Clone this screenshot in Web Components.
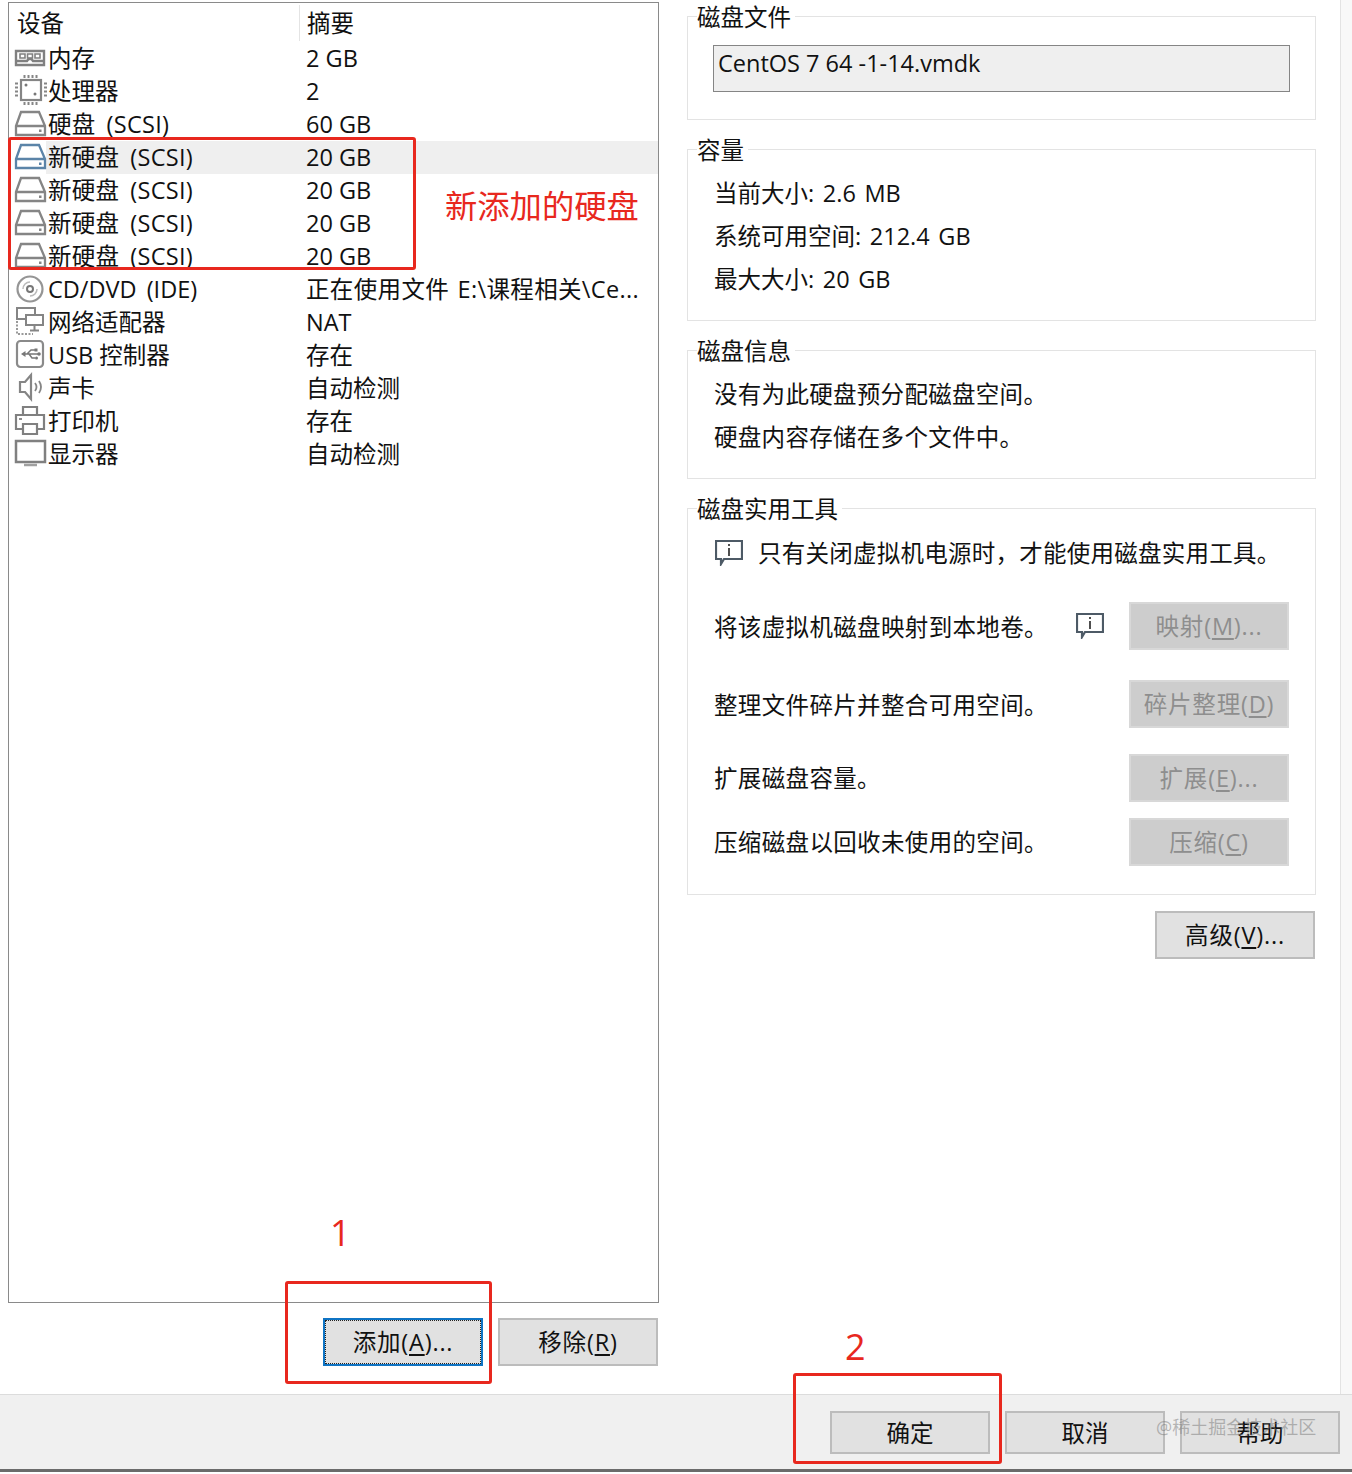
<!DOCTYPE html>
<html>
<head>
<meta charset="utf-8">
<title>虚拟机设置</title>
<style>
  html, body { margin: 0; background: #fff; }
  body {
    font-family: "Open Sans", "Noto Sans CJK SC", sans-serif;
    font-size: 23.5px;
    color: #111;
  }
</style>
</head>
<body>
<vm-settings></vm-settings>

<script>
const ICONS = {
  memory: `<path d="M1 8h28v14H1zM1 18h11l1.500-2h3l1.500 2h11" fill="none" stroke="#808080" stroke-width="2.400"/><path d="M5 11h5v4H5zM12.500 11h5v4h-5zM20 11h5v4h-5z" fill="none" stroke="#808080" stroke-width="1.600"/>`,
  cpu: `<rect x="6" y="4" width="20" height="20" fill="none" stroke="#858585" stroke-width="2.200"/><circle cx="11" cy="9" r="1.500" fill="#777"/><circle cx="20" cy="18" r="1.500" fill="#777"/><path d="M9.500 -1v3M13.500 -1v3M17.500 -1v3M21.500 -1v3M9.500 26v3M13.500 26v3M17.500 26v3M21.500 26v3M0 7.500h3M0 11.500h3M0 15.500h3M0 19.500h3M29 7.500h3M29 11.500h3M29 15.500h3M29 19.500h3" stroke="#858585" stroke-width="2"/>`,
  disk: `<path d="M6 3h18l6 14v9H1v-9zM1 17h29" fill="none" stroke="var(--c,#858585)" stroke-width="2.300"/><rect x="24" y="20.500" width="2.500" height="2.500" fill="var(--c,#858585)"/>`,
  cd: `<circle cx="15" cy="15" r="12.500" fill="none" stroke="#959595" stroke-width="2.200"/><circle cx="15" cy="15" r="3" fill="none" stroke="#777" stroke-width="2"/><path d="M8 15a7 7 0 0 1 7-7M22 15a7 7 0 0 1-7 7" fill="none" stroke="#bbb" stroke-width="1.500"/>`,
  net: `<path d="M2 14v13h16" fill="none" stroke="#999" stroke-width="2" stroke-dasharray="2 1.500"/><path d="M2 1h18v11H2z" fill="none" stroke="#858585" stroke-width="2"/><path d="M11 8h17v10H11z" fill="#fff" stroke="#858585" stroke-width="2"/><path d="M19.500 18v5M15 23.500h9" stroke="#858585" stroke-width="2"/>`,
  usb: `<rect x="2" y="1" width="26" height="26" rx="3.500" fill="none" stroke="#8a8a8a" stroke-width="2.200"/><path d="M8 14h15M12 14l4-4h4M14 14l3 4h3" fill="none" stroke="#777" stroke-width="1.500"/><path d="M6 14l4.500-3v6z" fill="#777"/><rect x="19.500" y="8.500" width="3" height="3" fill="#777"/><circle cx="24" cy="14" r="1.800" fill="#777"/><circle cx="21.500" cy="18" r="1.500" fill="#777"/>`,
  sound: `<path d="M5 9h5l6-7v24l-6-7H5z" fill="none" stroke="#858585" stroke-width="2.200"/><path d="M20 10q3 4 0 8M24 8q4 6 0 12" fill="none" stroke="#858585" stroke-width="1.800"/>`,
  printer: `<path d="M8 9V1h14v8" fill="none" stroke="#808080" stroke-width="2.200"/><path d="M8 23H1V9h28v14h-7" fill="none" stroke="#808080" stroke-width="2.200"/><path d="M8 18h14v10H8z" fill="none" stroke="#808080" stroke-width="2.200"/><path d="M4 13h3" stroke="#808080" stroke-width="1.800"/>`,
  monitor: `<rect x="1" y="2" width="29" height="21" fill="none" stroke="#808080" stroke-width="2.500"/><path d="M9 26h13" stroke="#a0a0a0" stroke-width="2.500"/>`
};

const ROWS = [
  ['memory', '内存', '2 GB'],
  ['cpu', '处理器', '2'],
  ['disk', '硬盘 (SCSI)', '60 GB'],
  ['disk', '新硬盘 (SCSI)', '20 GB', 'selected'],
  ['disk', '新硬盘 (SCSI)', '20 GB'],
  ['disk', '新硬盘 (SCSI)', '20 GB'],
  ['disk', '新硬盘 (SCSI)', '20 GB'],
  ['cd', 'CD/DVD (IDE)', '<span style="word-spacing:2px;letter-spacing:.35px">正在使用文件 E:\\课程相关\\Ce...</span>'],
  ['net', '网络适配器', 'NAT'],
  ['usb', 'USB 控制器', '存在'],
  ['sound', '声卡', '自动检测'],
  ['printer', '打印机', '存在'],
  ['monitor', '显示器', '自动检测']
];

class DeviceRow extends HTMLElement {
  constructor() {
    super();
    this.attachShadow({ mode: 'open' });
    const sel = this.hasAttribute('selected');
    const kind = this.getAttribute('icon');
    this.shadowRoot.innerHTML = `
      <style>
        :host { display: grid; grid-template-columns: 297px 1fr; height: 33px; align-items: center; white-space: nowrap; }
        :host([selected]) { background: linear-gradient(90deg, transparent 37px, #efefef 37px); }
        .name { display: flex; align-items: center; gap: 1px; padding-left: 6px; }
        .name span { word-spacing: ${kind === 'disk' ? 4.5 : kind === 'cd' ? 4 : 0}px; letter-spacing: ${kind === 'disk' ? .3 : 0}px; }
        svg { width: 32px; height: 30px; flex: none; overflow: visible; --c: ${sel ? '#5b84a8' : '#858585'}; }
      </style>
      <div class="name"><svg viewBox="0 0 32 30">${ICONS[kind]}</svg><span>${this.getAttribute('name')}</span></div>
      <div class="sum"><slot></slot></div>`;
  }
}
customElements.define('device-row', DeviceRow);

class DeviceList extends HTMLElement {
  constructor() {
    super();
    this.attachShadow({ mode: 'open' });
    this.shadowRoot.innerHTML = `
      <style>
        :host { display: block; width: 649px; height: 1299px; border: 1px solid #8a8a8a; }
        .head { display: grid; grid-template-columns: 290px 1fr; height: 39px; align-items: center; }
        .head div { padding-left: 8px; height: 36px; line-height: 36px; }
        .head div + div { border-left: 1px solid #e4e4e4; padding-left: 7px; }
      </style>
      <div class="head"><div>设备</div><div>摘要</div></div>
      <slot></slot>`;
  }
}
customElements.define('device-list', DeviceList);

class GroupBox extends HTMLElement {
  constructor() {
    super();
    this.attachShadow({ mode: 'open' });
    this.shadowRoot.innerHTML = `
      <style>
        :host { display: block; position: relative; box-sizing: border-box; border: 1px solid #e3e3e3; }
        .legend { position: absolute; left: 9px; top: -17px; background: #fff; line-height: 34px; padding-right: 4px; }
      </style>
      <div class="legend">${this.getAttribute('label')}</div>
      <slot></slot>`;
  }
}
customElements.define('group-box', GroupBox);

class WinButton extends HTMLElement {
  constructor() {
    super();
    this.attachShadow({ mode: 'open' });
    this.shadowRoot.innerHTML = `
      <style>
        :host { display: flex; align-items: center; justify-content: center; box-sizing: border-box; width: 160px; height: 48px; flex: none;
          background: #e1e1e1; border: 2px solid #bcbcbc; color: #111; white-space: nowrap; letter-spacing: .8px; }
        :host([disabled]) { background: #cdcdcd; border-color: #d8d8d8; color: #8e8e8e; }
        :host([focused]) { border-color: #0f74c4; outline: 1px dotted #222; outline-offset: -3px; }
        ::slotted(u) { text-underline-offset: 3px; }
      </style>
      <slot></slot>`;
  }
}
customElements.define('win-button', WinButton);

class InfoIcon extends HTMLElement {
  constructor() {
    super();
    this.attachShadow({ mode: 'open' });
    this.shadowRoot.innerHTML = `
      <style>
        :host { display: block; width: 28px; height: 26px; flex: none; }
        svg { display: block; }
      </style>
      <svg width="28" height="26" viewBox="0 0 28 26">
        <path d="M1 1h26v18H9l-3 5v-5H1z" fill="#fff" stroke="#4d5a66" stroke-width="2.200"/>
        <path d="M14 8v8" stroke="#222" stroke-width="1.600"/><path d="M14 4v2" stroke="#222" stroke-width="1.600"/>
      </svg>`;
  }
}
customElements.define('info-icon', InfoIcon);

class RedMark extends HTMLElement {
  constructor() {
    super();
    this.attachShadow({ mode: 'open' });
    this.shadowRoot.innerHTML = `
      <style>
        :host { display: block; position: absolute; box-sizing: border-box; border: 3px solid #e8281e; border-radius: 3px; pointer-events: none; }
      </style>`;
  }
}
customElements.define('red-mark', RedMark);

class RedNote extends HTMLElement {
  constructor() {
    super();
    this.attachShadow({ mode: 'open' });
    this.shadowRoot.innerHTML = `
      <style>
        :host { display: block; position: absolute; color: #e8281e; white-space: nowrap; line-height: 1; }
      </style>
      <slot></slot>`;
  }
}
customElements.define('red-note', RedNote);

class VmSettings extends HTMLElement {
  constructor() {
    super();
    this.attachShadow({ mode: 'open' });
    const rows = ROWS.map(r => `<device-row icon="${r[0]}" name="${r[1]}" ${r[3] || ''}>${r[2]}</device-row>`).join('');
    this.shadowRoot.innerHTML = `
      <style>
        :host { display: block; position: relative; width: 1352px; height: 1474px; overflow: hidden; line-height: 1.3; background: #fff; }
        .main { display: flex; height: 1395px; box-sizing: border-box; border-bottom: 1px solid #dcdcdc; background: #f8f8f8; }
        .left { width: 687px; flex: none; padding: 2px 0 0 8px; box-sizing: border-box; background: #fff; }
        .left-btns { display: flex; justify-content: flex-end; gap: 15px; width: 650px; margin-top: 15px; }
        .right { width: 654px; flex: none; padding-top: 16px; box-sizing: border-box; border-right: 1px solid #e3e3e3; background: #fff; }
        .right-in { width: 629px; display: flex; flex-direction: column; gap: 29px; }
        .file { height: 104px; padding: 28px 25px 0; }
        .file-in { height: 45px; background: #efefef; border: 1px solid #858585; padding-left: 4px; line-height: 34px; }
        .cap { height: 172px; padding: 22px 26px 0; }
        .line { height: 43px; display: flex; align-items: center; letter-spacing: .3px; }
        .cap .line { word-spacing: 2.500px; letter-spacing: 0; }
        .info { height: 129px; padding: 22px 26px 0; }
        .tools { height: 387px; padding: 26px 26px 0 26px; }
        .tool { display: flex; align-items: center; justify-content: space-between; }
        .tool span { padding-top: 2px; letter-spacing: .35px; }
        .tool.up span { padding-top: 0; }
        .tool info-icon { margin-left: auto; margin-right: 25px; }
        .note { display: flex; align-items: center; gap: 15px; height: 36px; padding-left: 1px; letter-spacing: .25px; }
        .adv { display: flex; justify-content: flex-end; width: 628px; margin-top: 16px; }
        .foot { display: flex; justify-content: flex-end; gap: 15px; height: 74px; box-sizing: border-box; padding: 16px 12px 0 0; background: #f0f0f0; }
        .foot win-button { height: 43px; padding-top: 2px; letter-spacing: 0; }
        .edge { height: 3px; background: #6b6b6b; }
        .wm { position: absolute; left: 1156px; top: 1416px; font-size: 18px; color: rgba(120,120,120,.5); white-space: nowrap; }
      </style>
      <div class="main">
        <div class="left">
          <device-list>${rows}</device-list>
          <div class="left-btns">
            <win-button focused>添加(<u>A</u>)...</win-button>
            <win-button>移除(<u>R</u>)</win-button>
          </div>
        </div>
        <div class="right">
          <div class="right-in">
            <group-box label="磁盘文件" class="file"><div class="file-in">CentOS 7 64 -1-14.vmdk</div></group-box>
            <group-box label="容量" class="cap">
              <div class="line">当前大小: 2.6 MB</div>
              <div class="line">系统可用空间: 212.4 GB</div>
              <div class="line">最大大小: 20 GB</div>
            </group-box>
            <group-box label="磁盘信息" class="info">
              <div class="line">没有为此硬盘预分配磁盘空间。</div>
              <div class="line">硬盘内容存储在多个文件中。</div>
            </group-box>
            <group-box label="磁盘实用工具" class="tools">
              <div class="note"><info-icon></info-icon><span>只有关闭虚拟机电源时，才能使用磁盘实用工具。</span></div>
              <div class="tool" style="margin-top:31px"><span>将该虚拟机磁盘映射到本地卷。</span><info-icon></info-icon><win-button disabled>映射(<u>M</u>)...</win-button></div>
              <div class="tool" style="margin-top:30px"><span>整理文件碎片并整合可用空间。</span><win-button disabled>碎片整理(<u>D</u>)</win-button></div>
              <div class="tool up" style="margin-top:26px"><span>扩展磁盘容量。</span><win-button disabled>扩展(<u>E</u>)...</win-button></div>
              <div class="tool up" style="margin-top:16px"><span>压缩磁盘以回收未使用的空间。</span><win-button disabled>压缩(<u>C</u>)</win-button></div>
            </group-box>
          </div>
          <div class="adv"><win-button>高级(<u>V</u>)...</win-button></div>
        </div>
      </div>
      <div class="foot">
        <win-button>确定</win-button>
        <win-button>取消</win-button>
        <win-button>帮助</win-button>
      </div>
      <div class="edge"></div>
      <div class="wm">@稀土掘金技术社区</div>
      <red-mark style="left:8px;top:137px;width:408px;height:133px"></red-mark>
      <red-mark style="left:285px;top:1281px;width:207px;height:103px"></red-mark>
      <red-mark style="left:793px;top:1373px;width:209px;height:91px"></red-mark>
      <red-note style="left:445px;top:189px;font-size:32.300px">新添加的硬盘</red-note>
      <red-note style="left:330px;top:1215px;font-size:36px">1</red-note>
      <red-note style="left:845px;top:1329px;font-size:36px">2</red-note>`;
  }
}
customElements.define('vm-settings', VmSettings);
</script>
</body>
</html>
